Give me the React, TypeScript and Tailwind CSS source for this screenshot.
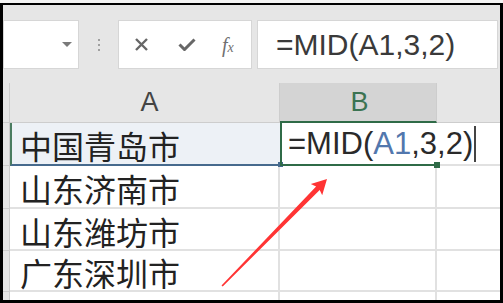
import React from "react";

const cjk = { fontFamily: '"Noto Sans CJK SC", "Noto Sans", sans-serif' };
const lat = { fontFamily: '"Liberation Sans", Arial, sans-serif' };

function Arrow() {
  return (
    <svg className="absolute left-0 top-0 pointer-events-none" width="503" height="303" viewBox="0 0 503 303">
      <polygon
        points="221.5,285.5 316.1,186.5 310.8,184 327,179 322.2,195.2 319.7,190 222.7,286.5"
        fill="#ff3434"
      />
    </svg>
  );
}

export default function App() {
  const rows = ["中国青岛市", "山东济南市", "山东潍坊市", "广东深圳市"];
  const rowH = ["h-[43px]", "h-[43px]", "h-[42px]", "h-[41px]"];
  return (
    <div className="relative w-[503px] h-[303px] overflow-hidden bg-white">
      <div className="h-[3px] bg-[#f4f4f4]" />
      <div className="flex flex-col h-[300px] border-t-2 border-l-[3px] border-r-[3px] border-b-[3px] border-black overflow-hidden">
        {/* toolbar */}
        <div className="h-[78px] shrink-0 bg-[#e6e6e6] flex items-start pt-[15px] pr-[2px]">
          <div className="w-[76px] h-[49px] bg-white border border-[#d6d6d6] flex items-center justify-end pr-[6px]">
            <svg width="10" height="6" viewBox="0 0 10 6">
              <polygon points="0,0 10,0 5,5" fill="#7a7a7a" />
            </svg>
          </div>
          <div className="w-[39px] h-[49px] flex flex-col items-center justify-center gap-[3px]">
            <div className="w-[2px] h-[2px] bg-[#a0a0a0]" />
            <div className="w-[2px] h-[2px] bg-[#a0a0a0]" />
            <div className="w-[2px] h-[2px] bg-[#a0a0a0]" />
          </div>
          <div className="w-[134px] h-[49px] bg-white border border-[#d6d6d6] flex items-center pl-[16px]">
            <svg width="13" height="13" viewBox="0 0 13 13">
              <path d="M1 1 L12 12 M12 1 L1 12" stroke="#676767" strokeWidth="2.4" />
            </svg>
            <svg className="ml-[30px]" width="18" height="13" viewBox="0 0 18 13">
              <path d="M1.5 6.5 L6.5 11.5 L16.5 1.5" stroke="#676767" strokeWidth="3" fill="none" />
            </svg>
            <span
              className="ml-[26px] text-[#707070] italic text-[20px] leading-none"
              style={{ fontFamily: '"Liberation Serif", serif' }}
            >
              f<span className="text-[14px]">x</span>
            </span>
          </div>
          <div className="w-[5px]" />
          <div
            className="flex-1 h-[49px] bg-white border border-[#d6d6d6] flex items-center pl-[18px] text-[30px] text-[#3a3a3a] leading-none"
            style={lat}
          >
            =MID(A1,3,2)
          </div>
        </div>
        {/* grid */}
        <div className="grid grid-cols-[7px_270px_157px_63px] grid-rows-[40px_43px_43px_42px_41px_8px]">
          {/* header row */}
          <div className="bg-[#e6e6e6] border-r border-b border-[#cdcdcd]" />
          <div
            className="bg-[#e6e6e6] border-r border-b border-[#cdcdcd] flex items-center justify-center pl-[10px] text-[27px] text-[#444]"
            style={lat}
          >
            A
          </div>
          <div
            className="bg-[#d4d4d4] border-r border-[#cdcdcd] border-b-2 border-b-[#2f6b47] flex items-center justify-center pl-[3px] text-[27px] text-[#3b7352]"
            style={lat}
          >
            B
          </div>
          <div className="bg-[#e6e6e6] border-b border-[#cdcdcd]" />
          {rows.map((t, i) => (
            <React.Fragment key={i}>
              <div className={`${rowH[i]} bg-[#e6e6e6] border-r border-b border-[#cdcdcd]`} />
              {i === 0 ? (
                <div
                  className="relative bg-[#edf1f6] border-l-2 border-l-[#4a7c60] border-b-2 border-b-[#466a8d] flex items-center pl-[8px] pt-[3px] text-[32px] text-[#222] leading-none"
                  style={cjk}
                >
                  {t}
                  <div className="absolute right-[-3px] bottom-[-3px] w-[5px] h-[5px] bg-[#466a8d]" />
                </div>
              ) : (
                <div
                  className="border-r-2 border-b-2 border-[#e1e1e1] flex items-center pl-[10px] pt-[3px] text-[32px] text-[#222] leading-none"
                  style={cjk}
                >
                  {t}
                </div>
              )}
              {i === 0 ? (
                <div className="relative z-10 border-l-2 border-l-[#2f6b47] border-b-2 border-b-[#2f6b47]">
                  <div
                    className="absolute left-[6px] top-0 h-full flex items-center whitespace-nowrap text-[31px] text-[#2a2a2a] leading-none"
                    style={lat}
                  >
                    =MID(<span className="text-[#5277ad]">A1</span>,3,2)
                    <span className="ml-[1px] w-[2px] h-[36px] bg-[#444]" />
                  </div>
                  <div className="absolute right-[-3px] bottom-[-4px] w-[6px] h-[6px] bg-[#2f6b47]" />
                </div>
              ) : (
                <div className="border-r-2 border-b-2 border-[#e1e1e1]" />
              )}
              <div className="border-b-2 border-[#e1e1e1]" />
            </React.Fragment>
          ))}
          <div className="bg-[#e6e6e6] border-r border-[#cdcdcd]" />
          <div className="border-r-2 border-[#e1e1e1]" />
          <div className="border-r-2 border-[#e1e1e1]" />
          <div />
        </div>
      </div>
      <Arrow />
    </div>
  );
}
